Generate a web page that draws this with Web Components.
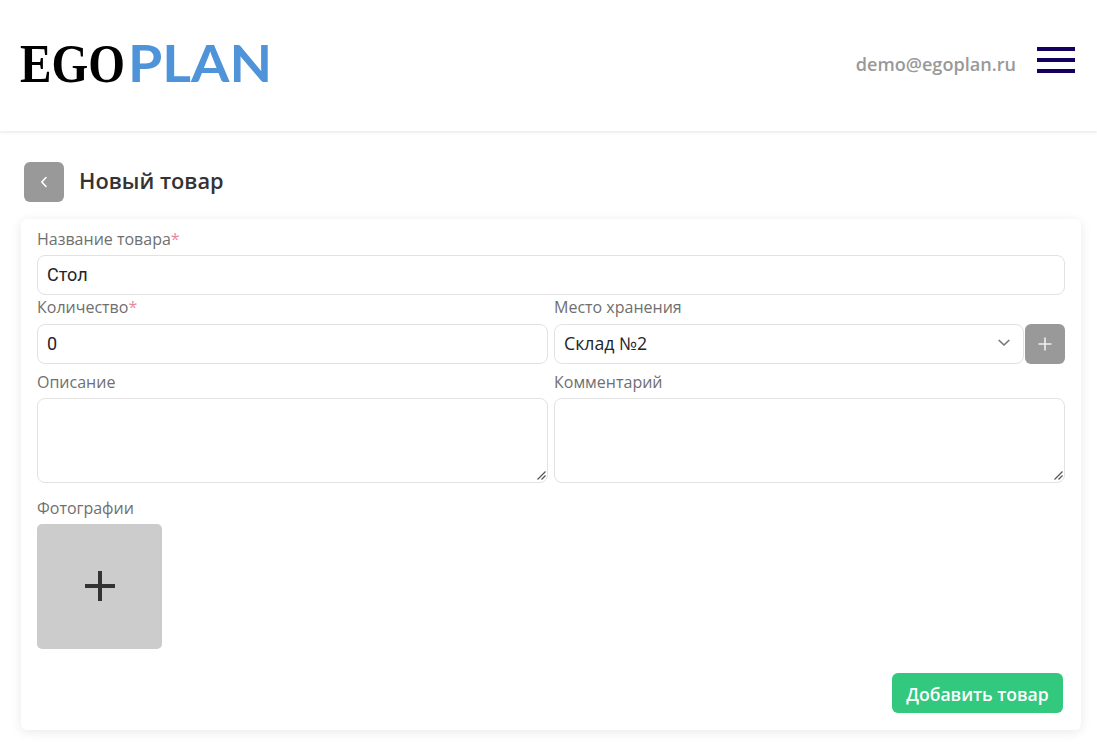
<!DOCTYPE html>
<html lang="ru">
<head>
<meta charset="utf-8">
<title>Новый товар</title>
<style>
  html, body { margin: 0; padding: 0; background: #fff; }
  body { font-family: "Open Sans", "Noto Sans", sans-serif; color: #333; min-height: 753px; }
</style>
</head>
<body>
<app-header email="demo@egoplan.ru"></app-header>
<page-title heading="Новый товар"></page-title>
<form-card>
  <form-field label="Название товара" required>
    <text-box value="Стол"></text-box>
  </form-field>
  <form-row tight>
    <form-field label="Количество" required>
      <text-box value="0"></text-box>
    </form-field>
    <form-field label="Место хранения">
      <store-select></store-select>
    </form-field>
  </form-row>
  <form-row>
    <form-field label="Описание"><area-box></area-box></form-field>
    <form-field label="Комментарий"><area-box></area-box></form-field>
  </form-row>
  <form-field label="Фотографии" class="photos"><photo-tile></photo-tile></form-field>
  <submit-bar text="Добавить товар"></submit-bar>
</form-card>

<script>
class AppHeader extends HTMLElement {
  connectedCallback() {
    this.attachShadow({ mode: 'open' });
    this.shadowRoot.innerHTML = `
      <style>
        :host {
          display: flex;
          align-items: center;
          justify-content: space-between;
          height: 131px;
          padding: 0 22px 11px 20px;
          box-sizing: border-box;
          background: #fff;
          box-shadow: 0 2px 2px rgba(0, 0, 0, 0.07);
        }
        .logo { display: flex; align-items: baseline; gap: 3px; height: 40px; margin-top: 5px; line-height: 40px; font-weight: 700; }
        .logo span { display: block; white-space: nowrap; transform-origin: left center; }
        .box { display: block; }
        .ego { font-family: "Liberation Serif", serif; font-size: 55px; color: #000; }
        .plan { font-family: "Lato", sans-serif; font-size: 51px; color: #4f94d9; }
        .right { display: flex; align-items: center; gap: 21px; }
        .email { font-size: 18.1px; font-weight: 600; color: #999; margin-top: 8px; }
        .burger { display: flex; flex-direction: column; gap: 7px; width: 38px; }
        .burger i { display: block; height: 4px; background: #15005f; }
      </style>
      <div class="logo">
        <div class="box" style="width:105px"><span class="ego">EGO</span></div>
        <div class="box" style="width:144px"><span class="plan">PLAN</span></div>
      </div>
      <div class="right">
        <span class="email">${this.getAttribute('email')}</span>
        <div class="burger"><i></i><i></i><i></i></div>
      </div>
    `;
    // squeeze each logo word into its box, the logo letters are narrower than the fonts
    this.shadowRoot.querySelectorAll('.logo span').forEach(word => {
      word.style.display = 'inline-block';
      const scale = word.parentElement.clientWidth / word.getBoundingClientRect().width;
      word.style.transform = `scaleX(${scale})`;
    });
  }
}
customElements.define('app-header', AppHeader);

class PageTitle extends HTMLElement {
  connectedCallback() {
    this.attachShadow({ mode: 'open' });
    this.shadowRoot.innerHTML = `
      <style>
        :host {
          display: flex;
          align-items: center;
          gap: 15px;
          padding: 31px 24px 17px;
        }
        .back {
          width: 40px;
          height: 40px;
          border-radius: 6px;
          background: #999;
          display: flex;
          align-items: center;
          justify-content: center;
        }
        h1 { margin: 0 0 2px; font-size: 21.8px; line-height: 38px; font-weight: 600; color: #333; }
      </style>
      <div class="back">
        <svg width="10" height="12" viewBox="0 0 10 12" fill="none" stroke="#fff" stroke-width="1.6" stroke-linecap="round" stroke-linejoin="round"><path d="M7 1.5 L2.8 6 L7 10.5"/></svg>
      </div>
      <h1>${this.getAttribute('heading')}</h1>
    `;
  }
}
customElements.define('page-title', PageTitle);

class FormCard extends HTMLElement {
  connectedCallback() {
    this.attachShadow({ mode: 'open' });
    this.shadowRoot.innerHTML = `
      <style>
        :host {
          display: flex;
          flex-direction: column;
          margin: 0 16px 0 21px;
          padding: 8px 16px 17px;
          height: 511px;
          box-sizing: border-box;
          background: #fff;
          border-radius: 6px;
          box-shadow: 0 2px 12px rgba(0, 0, 0, 0.09);
        }
      </style>
      <slot></slot>
    `;
  }
}
customElements.define('form-card', FormCard);

class FormRow extends HTMLElement {
  connectedCallback() {
    this.attachShadow({ mode: 'open' });
    this.shadowRoot.innerHTML = `
      <style>
        :host {
          display: grid;
          grid-template-columns: 1fr 1fr;
          gap: 6px;
          margin-top: 6px;
        }
        :host([tight]) { margin-top: 0; --label-gap: 5px; }
      </style>
      <slot></slot>
    `;
  }
}
customElements.define('form-row', FormRow);

class FormField extends HTMLElement {
  connectedCallback() {
    this.attachShadow({ mode: 'open' });
    const star = this.hasAttribute('required') ? '<b>*</b>' : '';
    this.shadowRoot.innerHTML = `
      <style>
        :host { display: block; min-width: 0; }
        :host(.photos) { margin-top: 13px; }
        label {
          display: block;
          font-size: 16px;
          line-height: 24px;
          margin-bottom: var(--label-gap, 4px);
          color: #6f6f6f;
        }
        b { font-weight: 400; color: #e88a96; }
      </style>
      <label>${this.getAttribute('label')}${star}</label>
      <slot></slot>
    `;
  }
}
customElements.define('form-field', FormField);

class TextBox extends HTMLElement {
  connectedCallback() {
    this.attachShadow({ mode: 'open' });
    this.shadowRoot.innerHTML = `
      <style>
        :host { display: block; }
        input {
          display: block;
          width: 100%;
          height: 40px;
          box-sizing: border-box;
          padding: 0 9px 2px;
          border: 1px solid #e2e2e2;
          border-radius: 8px;
          background: #fff;
          font-family: "Roboto", "Liberation Sans", sans-serif;
          font-size: 18px;
          color: #212529;
          outline: none;
        }
      </style>
      <input type="text" value="${this.getAttribute('value')}">
    `;
  }
}
customElements.define('text-box', TextBox);

class StoreSelect extends HTMLElement {
  connectedCallback() {
    this.attachShadow({ mode: 'open' });
    this.shadowRoot.innerHTML = `
      <style>
        :host { display: flex; gap: 1px; }
        .wrap { position: relative; flex: 1; min-width: 0; }
        select {
          display: block;
          width: 100%;
          height: 40px;
          box-sizing: border-box;
          padding: 0 32px 2px 9px;
          border: 1px solid #e2e2e2;
          border-radius: 8px;
          background: #fff;
          appearance: none;
          font-family: "Open Sans", "Noto Sans", sans-serif;
          font-size: 17.7px;
          color: #212529;
          outline: none;
        }
        .chev { position: absolute; right: 14px; top: 15px; pointer-events: none; }
        button {
          width: 40px;
          height: 40px;
          flex: none;
          padding: 0;
          border: 0;
          border-radius: 6px;
          background: #999;
          display: flex;
          align-items: center;
          justify-content: center;
        }
      </style>
      <div class="wrap">
        <select>
          <option>Склад №2</option>
          <option>Склад №1</option>
        </select>
        <svg class="chev" width="12" height="8" viewBox="0 0 12 8" fill="none" stroke="#777" stroke-width="1.7" stroke-linecap="round" stroke-linejoin="round"><path d="M1.2 1.5 L6 6 L10.8 1.5"/></svg>
      </div>
      <button type="button" aria-label="add">
        <svg width="14" height="14" viewBox="0 0 14 14" stroke="#f0f0f0" stroke-width="1.6"><path d="M7 0.5 V13.5 M0.5 7 H13.5"/></svg>
      </button>
    `;
  }
}
customElements.define('store-select', StoreSelect);

class AreaBox extends HTMLElement {
  connectedCallback() {
    this.attachShadow({ mode: 'open' });
    this.shadowRoot.innerHTML = `
      <style>
        :host { display: block; position: relative; }
        textarea {
          display: block;
          width: 100%;
          height: 85px;
          box-sizing: border-box;
          padding: 6px 9px;
          border: 1px solid #e2e2e2;
          border-radius: 8px;
          background: #fff;
          font: 16px "Roboto", sans-serif;
          outline: none;
        }
        textarea::-webkit-resizer { background: transparent; }
        .grip { position: absolute; right: 2px; bottom: 3px; pointer-events: none; }
      </style>
      <textarea></textarea>
      <svg class="grip" width="9" height="9" viewBox="0 0 9 9" stroke="#555" stroke-width="1.2" fill="none"><path d="M0.5 8.5 L8.5 0.5 M4.5 8.5 L8.5 4.5"/></svg>
    `;
  }
}
customElements.define('area-box', AreaBox);

class PhotoTile extends HTMLElement {
  connectedCallback() {
    this.attachShadow({ mode: 'open' });
    this.shadowRoot.innerHTML = `
      <style>
        :host {
          display: flex;
          align-items: center;
          justify-content: center;
          width: 125px;
          height: 125px;
          border-radius: 5px;
          background: #ccc;
        }
        svg { margin-top: -1px; }
      </style>
      <svg width="30" height="30" viewBox="0 0 30 30" stroke="#333" stroke-width="4"><path d="M15 0 V30 M0 15 H30"/></svg>
    `;
  }
}
customElements.define('photo-tile', PhotoTile);

class SubmitBar extends HTMLElement {
  connectedCallback() {
    this.attachShadow({ mode: 'open' });
    this.shadowRoot.innerHTML = `
      <style>
        :host {
          display: flex;
          justify-content: flex-end;
          margin-top: 24px;
          padding-right: 2px;
        }
        button {
          width: 171px;
          height: 40px;
          padding: 2px 0 0;
          border: 0;
          border-radius: 6px;
          background: #32c87e;
          color: #fff;
          font-family: "Open Sans", "Noto Sans", sans-serif;
          font-size: 17.6px;
          font-weight: 600;
        }
      </style>
      <button type="button">${this.getAttribute('text')}</button>
    `;
  }
}
customElements.define('submit-bar', SubmitBar);
</script>
</body>
</html>
